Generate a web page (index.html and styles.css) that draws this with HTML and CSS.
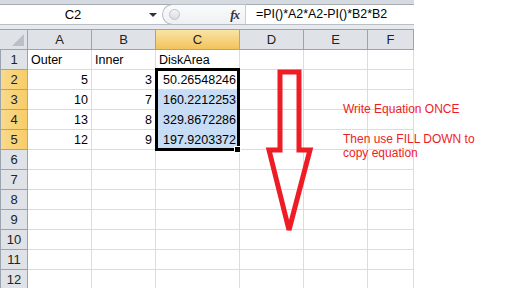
FILE: index.html
```html
<!DOCTYPE html>
<html lang="en">
<head>
    <meta charset="UTF-8">
    <title>Disk Area</title>
    <link rel="stylesheet" href="styles.css">
</head>
<body>
    <div class="window">
        <div class="formula-bar">
            <div class="name-box">C2</div>
            <div class="name-drop"></div>
            <div class="fx-slot">
                <span class="grip"></span>
                <span class="fx">fx</span>
            </div>
            <div class="formula">=PI()*A2*A2-PI()*B2*B2</div>
        </div>

        <div class="sheet">
            <div class="grid">
                <div class="corner"><span class="corner-tri"></span></div>
                <div class="col-head">A</div>
                <div class="col-head">B</div>
                <div class="col-head active">C</div>
                <div class="col-head">D</div>
                <div class="col-head">E</div>
                <div class="col-head">F</div>

                <div class="row-head">1</div>
                <div class="cell">Outer</div>
                <div class="cell">Inner</div>
                <div class="cell">DiskArea</div>
                <div class="cell"></div><div class="cell"></div><div class="cell"></div>

                <div class="row-head active">2</div>
                <div class="cell num">5</div>
                <div class="cell num">3</div>
                <div class="cell num">50.26548246</div>
                <div class="cell"></div><div class="cell"></div><div class="cell"></div>

                <div class="row-head active">3</div>
                <div class="cell num">10</div>
                <div class="cell num">7</div>
                <div class="cell num sel">160.2212253</div>
                <div class="cell"></div><div class="cell"></div><div class="cell"></div>

                <div class="row-head active">4</div>
                <div class="cell num">13</div>
                <div class="cell num">8</div>
                <div class="cell num sel">329.8672286</div>
                <div class="cell"></div><div class="cell"></div><div class="cell"></div>

                <div class="row-head active">5</div>
                <div class="cell num">12</div>
                <div class="cell num">9</div>
                <div class="cell num sel">197.9203372</div>
                <div class="cell"></div><div class="cell"></div><div class="cell"></div>

                <div class="row-head">6</div>
                <div class="cell"></div><div class="cell"></div><div class="cell"></div><div class="cell"></div><div class="cell"></div><div class="cell"></div>
                <div class="row-head">7</div>
                <div class="cell"></div><div class="cell"></div><div class="cell"></div><div class="cell"></div><div class="cell"></div><div class="cell"></div>
                <div class="row-head">8</div>
                <div class="cell"></div><div class="cell"></div><div class="cell"></div><div class="cell"></div><div class="cell"></div><div class="cell"></div>
                <div class="row-head">9</div>
                <div class="cell"></div><div class="cell"></div><div class="cell"></div><div class="cell"></div><div class="cell"></div><div class="cell"></div>
                <div class="row-head">10</div>
                <div class="cell"></div><div class="cell"></div><div class="cell"></div><div class="cell"></div><div class="cell"></div><div class="cell"></div>
                <div class="row-head">11</div>
                <div class="cell"></div><div class="cell"></div><div class="cell"></div><div class="cell"></div><div class="cell"></div><div class="cell"></div>
                <div class="row-head">12</div>
                <div class="cell"></div><div class="cell"></div><div class="cell"></div><div class="cell"></div><div class="cell"></div><div class="cell"></div>
            </div>

            <div class="selection"><span class="handle"></span></div>

            <svg class="arrow" width="60" height="180" viewBox="0 0 60 180">
                <polygon points="24,43 43,43 43,121 54,121 33,201 13,121 24,121" />
            </svg>

            <div class="note">
                <p>Write Equation ONCE</p>
                <p>Then use FILL DOWN to<br>copy equation</p>
            </div>
        </div>
    </div>
</body>
</html>
```

FILE: styles.css
```css
body {
    margin: 0;
    background: #fff;
    font-family: "Liberation Sans", Arial, sans-serif;
    color: #000;
    overflow: hidden;
}
.window {
    width: 414px;
    height: 288px;
}
.formula-bar {
    display: flex;
    height: 29px;
    box-sizing: border-box;
    background: #fff;
    border-top: 4px solid #d5dae0;
    border-bottom: 4px solid #e6eaee;
    box-shadow: inset 0 1px 0 #a7abb0, inset 0 -1px 0 #b9bec4;
}
.name-box {
    width: 146px;
    font-size: 13px;
    line-height: 21px;
    text-align: center;
}
.name-drop {
    width: 16px;
    position: relative;
}
.name-drop::after {
    content: "";
    position: absolute;
    left: 3px;
    top: 9px;
    border-left: 4px solid transparent;
    border-right: 4px solid transparent;
    border-top: 4px solid #333;
}
.fx-slot {
    width: 84px;
    box-sizing: border-box;
    display: flex;
    align-items: center;
    justify-content: space-between;
    padding: 0 6px 0 6px;
    border: 1px solid #b6bcc4;
    border-right-color: #c9ced4;
    border-radius: 11px 0 0 11px;
    background: linear-gradient(#fafbfc, #eef0f3);
}
.grip {
    width: 9px;
    height: 9px;
    border-radius: 50%;
    border: 1px solid #bcc2c9;
    background: linear-gradient(#f4f5f7, #d9dde2);
}
.fx {
    font-family: "Liberation Serif", serif;
    font-style: italic;
    font-size: 13px;
    font-weight: bold;
    color: #333;
    letter-spacing: -1px;
}
.formula {
    padding-left: 10px;
    font-size: 12.4px;
    line-height: 21px;
}
.sheet {
    position: relative;
}
.grid {
    display: grid;
    grid-template-columns: 28px 64px 64px 84px 64px 64px 46px;
    grid-template-rows: 21px;
    grid-auto-rows: 20px;
    font-size: 12.5px;
}
.grid > div {
    box-sizing: border-box;
    border-right: 1px solid #dadcdd;
    border-bottom: 1px solid #dadcdd;
}
.corner {
    position: relative;
    background: #dfe3e8;
    border-top: 1px solid #9ba4ad;
}
.grid > .corner, .grid > .col-head, .grid > .row-head {
    border-color: #9ba4ad;
}
.corner-tri {
    position: absolute;
    right: 3px;
    bottom: 3px;
    border-left: 12px solid transparent;
    border-bottom: 12px solid #b9c0c8;
}
.col-head {
    background: #dfe3e8;
    border-top: 1px solid #9ba4ad;
    text-align: center;
    line-height: 19px;
    font-size: 13px;
    color: #222;
}
.col-head.active {
    background: linear-gradient(#f9e4a6, #f2c35b);
    border-bottom-color: #f29436 !important;
    border-right-color: #c2a56b !important;
}
.row-head {
    background: #dfe3e8;
    border-left: 1px solid #8d959e;
    text-align: center;
    line-height: 19px;
    font-size: 13px;
    color: #222;
}
.row-head.active {
    background: linear-gradient(90deg, #f9d98c, #f7cd68);
    border-right-color: #d8a83b !important;
}
.cell {
    padding: 0 3px;
    line-height: 20px;
    white-space: nowrap;
    overflow: hidden;
}
.cell.num {
    text-align: right;
}
.cell.sel {
    background: #c6ddf5;
}
.selection {
    position: absolute;
    left: 155px;
    top: 39px;
    width: 85px;
    height: 83px;
    box-sizing: border-box;
    border: 3px solid #000;
}
.handle {
    position: absolute;
    right: -4px;
    bottom: -5px;
    width: 5px;
    height: 5px;
    background: #000;
    border: 1px solid #fff;
}
.arrow {
    position: absolute;
    left: 256px;
    top: 0;
    overflow: visible;
}
.arrow polygon {
    fill: none;
    stroke: #ee1c24;
    stroke-width: 5;
    stroke-linejoin: miter;
}
.note {
    position: absolute;
    left: 343px;
    top: 73px;
    font-size: 12px;
    line-height: 14px;
    color: #ee1c24;
    white-space: nowrap;
}
.note p {
    margin: 0 0 16px;
}
```
